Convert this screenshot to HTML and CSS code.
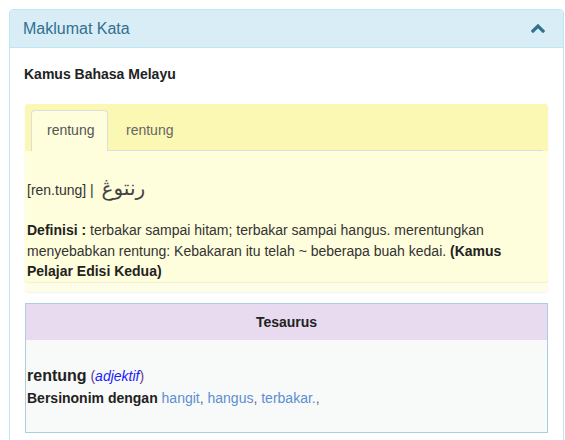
FILE: index.html
```html
<!DOCTYPE html>
<html>
<head>
<meta charset="utf-8">
<link rel="stylesheet" href="styles.css">
</head>
<body>
<div class="panel">
  <div class="panel-heading">
    <span class="panel-title">Maklumat Kata</span>
    <svg class="chev" width="14" height="10" viewBox="0 0 14 10"><polyline points="2,8 7,3 12,8" fill="none" stroke="#31708f" stroke-width="3.2" stroke-linecap="square"/></svg>
  </div>
  <div class="panel-body">
    <div class="source">Kamus Bahasa Melayu</div>
    <div class="entry">
      <ul class="tabs">
        <li class="tab active">rentung</li>
        <li class="tab">rentung</li>
      </ul>
      <div class="tab-content">
        <div class="pron">[ren.tung] | <span class="jawi" lang="ms-Arab" dir="rtl">رنتوڠ</span></div>
        <div class="def"><b>Definisi :</b> terbakar sampai hitam; terbakar sampai hangus. merentungkan menyebabkan rentung: Kebakaran itu telah ~ beberapa buah kedai. <b>(Kamus Pelajar Edisi Kedua)</b></div>
      </div>
    </div>
    <div class="thesaurus">
      <div class="th-head">Tesaurus</div>
      <div class="th-body">
        <div class="word"><b>rentung</b> <span class="pos">(<i>adjektif</i>)</span></div>
        <div class="syn"><b>Bersinonim dengan</b> <a href="#">hangit</a>, <a href="#">hangus</a>, <a href="#">terbakar.</a>,</div>
      </div>
    </div>
  </div>
</div>
</body>
</html>
```
FILE: styles.css
```css
html, body {
  margin: 0;
  padding: 0;
  background: #fff;
}
body {
  font-family: "Liberation Sans", Arial, sans-serif;
  font-size: 14px;
  color: #333;
}
.panel {
  margin: 9px 0 0 9px;
  width: 553px;
  border: 1px solid #bce8f1;
  border-radius: 4px;
  background: #fff;
}
.panel-heading {
  display: flex;
  align-items: center;
  justify-content: space-between;
  height: 37px;
  padding: 0 18px 0 13px;
  background: #d9edf7;
  border-bottom: 1px solid #bce8f1;
  border-radius: 3px 3px 0 0;
}
.panel-title {
  font-size: 16px;
  color: #31708f;
}
.chev {
  display: block;
  margin-top: -2px;
}
.panel-body {
  padding: 16px 15px 20px 15px;
}
.source {
  font-weight: bold;
  font-size: 14px;
  line-height: 20px;
  margin-left: -1px;
  margin-bottom: 20px;
  color: #222;
}
.entry {
  background: #fefde6;
  border-radius: 4px;
  box-shadow: 0 1px 2px rgba(0,0,0,0.06);
  padding-bottom: 10px;
}
.tabs {
  list-style: none;
  margin: 0;
  padding: 6px 5px 0 6px;
  display: flex;
  background: #fbf8b3;
  border-radius: 4px 4px 0 0;
  position: relative;
}
.tabs::after {
  content: "";
  position: absolute;
  left: 6px;
  right: 5px;
  bottom: 0;
  height: 1px;
  background: #ddd;
}
.tab {
  font-size: 14px;
  color: #666;
  height: 40px;
  line-height: 38px;
  padding: 0 15px;
  margin-right: 2px;
  border: 1px solid transparent;
  border-bottom: none;
  border-radius: 4px 4px 0 0;
  box-sizing: border-box;
  position: relative;
  z-index: 1;
}
.tab.active {
  background: #fefddc;
  border-color: #ddd;
  width: 77px;
  height: 41px;
  color: #555;
}
.tab-content {
  background: #fefddc;
  border-radius: 0 0 4px 4px;
  box-shadow: 0 1px 1px rgba(0,0,0,0.06);
  padding: 22px 2px 0 2px;
}
.pron {
  font-size: 14px;
  line-height: 30px;
  color: #333;
  margin-bottom: 15px;
}
.jawi {
  font-family: "DejaVu Sans", sans-serif;
  font-size: 20px;
  margin-left: 4px;
  color: #444;
}
.def {
  font-size: 14px;
  line-height: 20.5px;
  color: #333;
}
.def b {
  color: #222;
}
.thesaurus {
  margin-top: 11px;
  border: 1px solid #a9cde3;
  background: #f8f9f9;
  height: 130px;
  box-sizing: border-box;
}
.th-head {
  background: #e8daef;
  height: 36px;
  line-height: 36px;
  text-align: center;
  font-weight: bold;
  font-size: 14px;
  color: #222;
}
.th-body {
  padding: 25px 1px 0 1px;
}
.word {
  font-size: 14px;
  line-height: 22px;
}
.word b {
  font-size: 16px;
  color: #222;
}
.pos {
  color: #6a3a8a;
}
.pos i {
  color: #1a1aff;
}
.syn {
  font-size: 14px;
  line-height: 22px;
  color: #666;
}
.syn b {
  color: #222;
}
.syn a {
  color: #5b8fd0;
  text-decoration: none;
}
```
